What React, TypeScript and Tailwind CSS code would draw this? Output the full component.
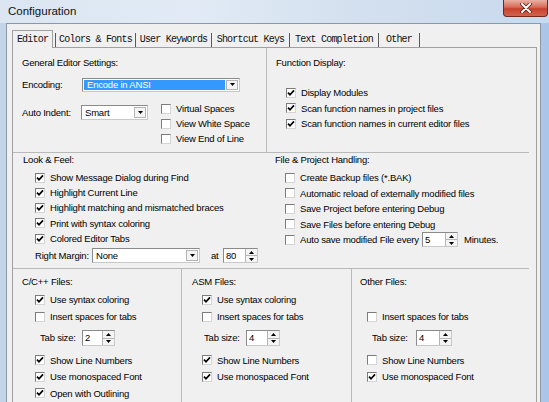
import React from 'react';

type BoxProps = { checked?: boolean };

const Box: React.FC<BoxProps> = ({ checked }) => (
  <span className="w-[10px] h-[10px] shrink-0 bg-white border border-t-[#7c7c7c] border-l-[#7c7c7c] border-b-[#d4d4d4] border-r-[#d4d4d4] flex items-center justify-center">
    {checked && (
      <svg width="8" height="8" viewBox="0 0 8 8">
        <path d="M1 3.6 L3 5.8 L7 1.4" stroke="#000" strokeWidth="1.7" fill="none" />
      </svg>
    )}
  </span>
);

type CheckProps = { label: string; checked?: boolean; row?: string };

const Check: React.FC<CheckProps> = ({ label, checked, row = 'h-[15px]' }) => (
  <div className={`flex items-center ${row}`}>
    <Box checked={checked} />
    <span className="ml-[5px] whitespace-nowrap">{label}</span>
  </div>
);

const Arrow = ({ up }: { up?: boolean }) => (
  <svg width="5" height="3" viewBox="0 0 5 3">
    <path d={up ? 'M0 3 H5 L2.5 0 Z' : 'M0 0 H5 L2.5 3 Z'} fill="#000" />
  </svg>
);

type SelectProps = { value: string; size: string; highlight?: boolean };

const Select: React.FC<SelectProps> = ({ value, size, highlight }) => (
  <div className={`${size} bg-white border border-t-[#8a8a8a] border-l-[#8a8a8a] border-b-[#c8c8c8] border-r-[#c8c8c8] flex items-stretch p-[1px]`}>
    <div className="flex-1 flex items-stretch">
      {highlight ? (
        <span className="flex-1 bg-[#3399ff] text-white pl-[3px] mr-[1px] flex items-center">{value}</span>
      ) : (
        <span className="pl-[2px] flex items-center">{value}</span>
      )}
    </div>
    <div className="w-[12px] bg-[#f4f4f4] border border-[#b4b4b4] flex items-center justify-center">
      <Arrow />
    </div>
  </div>
);

type SpinProps = { value: string; size: string };

const Spin: React.FC<SpinProps> = ({ value, size }) => (
  <div className={`${size} bg-white border border-t-[#8a8a8a] border-l-[#8a8a8a] border-b-[#c8c8c8] border-r-[#c8c8c8] flex items-stretch`}>
    <span className="flex-1 pl-[2px] flex items-center">{value}</span>
    <div className="w-[12px] flex flex-col border-l border-[#b4b4b4] bg-[#f4f4f4]">
      <div className="flex-1 flex items-center justify-center border-b border-[#b4b4b4]">
        <Arrow up />
      </div>
      <div className="flex-1 flex items-center justify-center">
        <Arrow />
      </div>
    </div>
  </div>
);

const tabs = [
  { name: 'Colors & Fonts', w: 'w-[80px]' },
  { name: 'User Keywords', w: 'w-[76px]' },
  { name: 'Shortcut Keys', w: 'w-[78px]' },
  { name: 'Text Completion', w: 'w-[89px]' },
  { name: 'Other', w: 'w-[41px]' },
];

export default function App() {
  return (
    <div className="w-[549px] h-[402px] overflow-hidden relative bg-[linear-gradient(90deg,#c3d4e8_0%,#d6e3f1_30%,#cddcee_60%,#a9c6e8_100%)] font-['Liberation_Sans',Arial,sans-serif] text-[9.5px] tracking-[-0.2px] leading-none text-black">
      {/* title bar */}
      <div className="h-[23px] flex items-center pl-[8px] bg-[linear-gradient(90deg,#dbe6f2_0%,#e2ebf5_35%,#d3e0ef_65%,#c9daee_100%)]">
        <span className="text-[11.5px] tracking-normal text-[#111]">Configuration</span>
      </div>
      <div className="absolute right-[1px] top-0 w-[45px] h-[17px] rounded-b-[4px] border border-t-0 border-[#6e2a20] bg-[linear-gradient(180deg,#eab0a3_0%,#d86b57_45%,#c7412c_55%,#d2644e_100%)] flex items-center justify-center">
        <svg width="12" height="10" viewBox="0 0 12 10">
          <path d="M2 1 L10 9 M10 1 L2 9" stroke="#5a1d14" strokeWidth="3.6" strokeLinecap="round" />
          <path d="M2 1 L10 9 M10 1 L2 9" stroke="#fff" strokeWidth="2" strokeLinecap="round" />
        </svg>
      </div>

      {/* client area */}
      <div className="ml-[6px] mr-[8px] h-[379px] bg-[#f0f0f0] border border-b-0 border-[#8c98a8] pl-[5px] pr-[3px] pt-[6px]">
        {/* tabs */}
        <div className="flex items-end h-[17px] font-['Liberation_Mono',monospace] text-[10px] tracking-[-0.8px] text-[#111]">
          <div className="w-[41px] h-[18px] -mb-px relative z-10 bg-[#f0f0f0] border border-b-0 border-[#a0a0a0] flex items-center justify-center">
            Editor
          </div>
          <div className="w-[3px] h-[14px] border-r border-[#5a5a5a]" />
          {tabs.map((t) => (
            <div key={t.name} className={`${t.w} h-[14px] border-r border-[#5a5a5a] flex items-center justify-center whitespace-nowrap`}>
              {t.name}
            </div>
          ))}
        </div>

        {/* panel */}
        <div className="border border-b-0 border-[#a0a0a0] h-[360px]">
          {/* top row */}
          <div className="flex h-[104px]">
            <div className="w-[254px] border-r border-[#b9b9b9] pl-[9px] pt-[9px]">
              <div className="h-[12px] flex items-center">General Editor Settings:</div>
              <div className="mt-[8px] h-[15px] flex items-center">
                <span className="w-[60px]">Encoding:</span>
                <Select value="Encode in ANSI" size="w-[158px] h-[14px]" highlight />
              </div>
              <div className="mt-[9px] flex items-start">
                <div className="mt-[4px] h-[15px] flex items-center">
                  <span className="w-[59px]">Auto Indent:</span>
                  <Select value="Smart" size="w-[67px] h-[15px]" />
                </div>
                <div className="ml-[13px]">
                  <Check label="Virtual Spaces" />
                  <Check label="View White Space" />
                  <Check label="View End of Line" />
                </div>
              </div>
            </div>
            <div className="flex-1 pl-[9px] pt-[9px]">
              <div className="h-[12px] flex items-center">Function Display:</div>
              <div className="mt-[16px] pl-[10px]">
                <Check label="Display Modules" checked row="h-[15.5px]" />
                <Check label="Scan function names in project files" checked row="h-[15.5px]" />
                <Check label="Scan function names in current editor files" checked row="h-[15.5px]" />
              </div>
            </div>
          </div>
          <div className="h-px bg-[#b9b9b9] mr-[7px]" />

          {/* middle row */}
          <div className="flex h-[115px]">
            <div className="w-[253px] pl-[10px] pt-[1px]">
              <div className="h-[12px] flex items-center">Look &amp; Feel:</div>
              <div className="mt-[4px] pl-[12px]">
                <Check label="Show Message Dialog during Find" checked row="h-[15.25px]" />
                <Check label="Highlight Current Line" checked row="h-[15.25px]" />
                <Check label="Highlight matching and mismatched braces" checked row="h-[15.25px]" />
                <Check label="Print with syntax coloring" checked row="h-[15.25px]" />
                <Check label="Colored Editor Tabs" checked row="h-[15.25px]" />
                <div className="mt-[2px] h-[15px] flex items-center">
                  <span className="w-[57px]">Right Margin:</span>
                  <Select value="None" size="w-[108px] h-[15px]" />
                  <span className="ml-[11px] w-[12px]">at</span>
                  <Spin value="80" size="w-[35px] h-[15px]" />
                </div>
              </div>
            </div>
            <div className="flex-1 pl-[9px] pt-[1px]">
              <div className="h-[12px] flex items-center">File &amp; Project Handling:</div>
              <div className="mt-[4px] pl-[10px]">
                <Check label="Create Backup files (*.BAK)" row="h-[15.5px]" />
                <Check label="Automatic reload of externally modified files" row="h-[15.5px]" />
                <Check label="Save Project before entering Debug" row="h-[15.5px]" />
                <Check label="Save Files before entering Debug" row="h-[15.5px]" />
                <div className="h-[15.5px] flex items-center">
                  <Box />
                  <span className="ml-[5px] w-[122px] whitespace-nowrap">Auto save modified File every</span>
                  <Spin value="5" size="w-[36px] h-[15px]" />
                  <span className="ml-[6px]">Minutes.</span>
                </div>
              </div>
            </div>
          </div>
          <div className="h-px bg-[#b9b9b9] mr-[7px]" />

          {/* bottom row */}
          <div className="flex h-[140px]">
            <div className="w-[169px] border-r border-[#b9b9b9] pl-[9px] pt-[7px]">
              <div className="h-[12px] flex items-center">C/C++ Files:</div>
              <div className="mt-[3px] pl-[13px]">
                <Check label="Use syntax coloring" checked row="h-[17px]" />
                <Check label="Insert spaces for tabs" row="h-[17px]" />
                <div className="mt-[5px] h-[16px] flex items-center pl-[5px]">
                  <span className="w-[42px]">Tab size:</span>
                  <Spin value="2" size="w-[33px] h-[16px]" />
                </div>
                <div className="mt-[6px]">
                  <Check label="Show Line Numbers" checked row="h-[16.5px]" />
                  <Check label="Use monospaced Font" checked row="h-[16.5px]" />
                  <Check label="Open with Outlining" checked row="h-[16.5px]" />
                </div>
              </div>
            </div>
            <div className="w-[170px] border-r border-[#b9b9b9] pl-[10px] pt-[7px]">
              <div className="h-[12px] flex items-center">ASM Files:</div>
              <div className="mt-[3px] pl-[10px]">
                <Check label="Use syntax coloring" checked row="h-[17px]" />
                <Check label="Insert spaces for tabs" row="h-[17px]" />
                <div className="mt-[5px] h-[16px] flex items-center pl-[2px]">
                  <span className="w-[42px]">Tab size:</span>
                  <Spin value="4" size="w-[34px] h-[16px]" />
                </div>
                <div className="mt-[6px]">
                  <Check label="Show Line Numbers" checked row="h-[16.5px]" />
                  <Check label="Use monospaced Font" checked row="h-[16.5px]" />
                </div>
              </div>
            </div>
            <div className="flex-1 pl-[8px] pt-[7px]">
              <div className="h-[12px] flex items-center">Other Files:</div>
              <div className="mt-[3px] pl-[7px]">
                <div className="h-[17px]" />
                <Check label="Insert spaces for tabs" row="h-[17px]" />
                <div className="mt-[5px] h-[16px] flex items-center pl-[5px]">
                  <span className="w-[44px]">Tab size:</span>
                  <Spin value="4" size="w-[36px] h-[16px]" />
                </div>
                <div className="mt-[6px]">
                  <Check label="Show Line Numbers" row="h-[16.5px]" />
                  <Check label="Use monospaced Font" checked row="h-[16.5px]" />
                </div>
              </div>
            </div>
          </div>
        </div>
      </div>
    </div>
  );
}
